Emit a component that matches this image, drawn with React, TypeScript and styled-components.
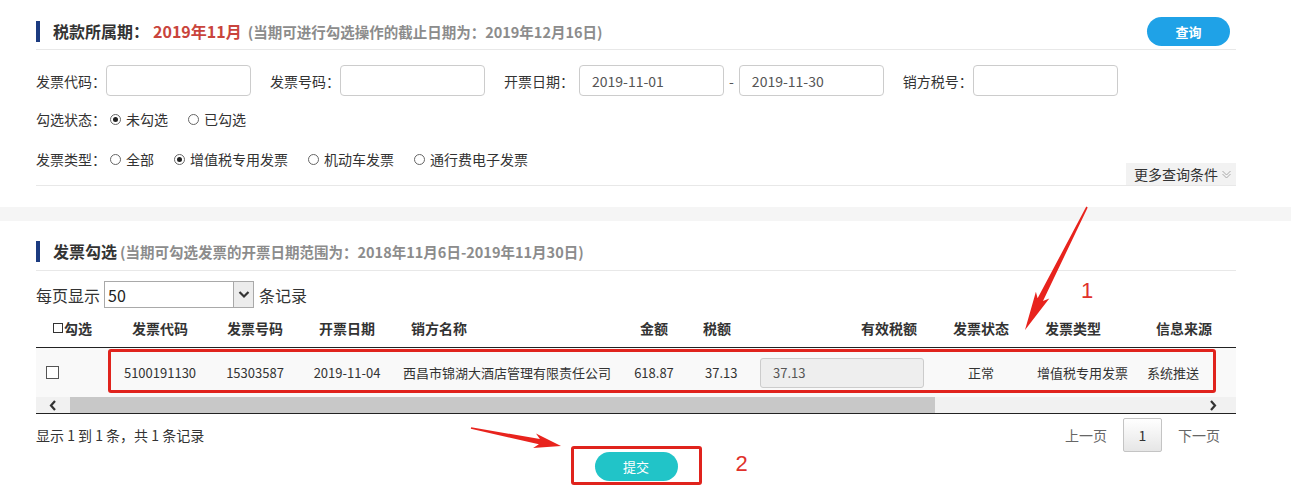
import React from "react";
import styled, { createGlobalStyle } from "styled-components";

const Global = createGlobalStyle`
  html, body { margin: 0; padding: 0; background: #f5f5f5; }
  body {
    font-family: "Noto Sans CJK SC", "Microsoft YaHei", "Liberation Sans", sans-serif;
    color: #333;
    font-size: 13px;
  }
  * { box-sizing: border-box; }
`;

const Page = styled.div`
  position: relative;
  min-height: 100vh;
  display: flex;
  flex-direction: column;
  gap: 14px;
  background: #f5f5f5;
  overflow: hidden;
`;

const Panel = styled.section<{ $pad: string; $grow?: boolean }>`
  background: #fff;
  padding: ${(p) => p.$pad};
  flex: ${(p) => (p.$grow ? "1" : "none")};
  display: flex;
  flex-direction: column;
`;

const TitleRow = styled.div<{ $pb: number }>`
  display: flex;
  align-items: center;
  justify-content: space-between;
  padding-bottom: ${(p) => p.$pb}px;
  border-bottom: 1px solid #e8e8e8;
`;

const Title = styled.div`
  display: flex;
  align-items: center;
  height: 21px;
  border-left: 4px solid #1c3b80;
  padding-left: 13px;
  white-space: nowrap;
`;

const TitleMain = styled.span`
  font-size: 16px;
  font-weight: 700;
  color: #333;
  line-height: 21px;
`;

const TitlePeriod = styled.span`
  font-size: 16px;
  font-weight: 700;
  color: #c9443c;
  margin-left: 4px;
  line-height: 21px;
`;

const TitleNote = styled.span<{ $ml: number }>`
  font-size: 14.5px;
  font-weight: 700;
  color: #8c8c8c;
  margin-left: ${(p) => p.$ml}px;
  line-height: 21px;
`;

const PillButton = styled.button<{ $bg: string; $w: number; $bold?: boolean }>`
  width: ${(p) => p.$w}px;
  height: 29px;
  border: none;
  border-radius: 15px;
  background: ${(p) => p.$bg};
  color: #fff;
  font-family: inherit;
  font-size: 13px;
  font-weight: ${(p) => (p.$bold ? 700 : 400)};
  padding: 0;
  cursor: pointer;
  flex: none;
`;

const QueryWrap = styled.div`
  margin-right: 6px;
  display: flex;
`;

const FilterArea = styled.div`
  padding-top: 15px;
  display: flex;
  flex-direction: column;
  border-bottom: 1px solid #e8e8e8;
`;

const FieldRow = styled.div`
  display: flex;
  align-items: center;
  height: 31px;
  gap: 19px;
`;

const Field = styled.div<{ $gap: number }>`
  display: flex;
  align-items: center;
  gap: ${(p) => p.$gap}px;
`;

const Label = styled.span`
  font-size: 14px;
  color: #333;
  line-height: 20px;
  white-space: nowrap;
`;

const TextInput = styled.div`
  width: 145px;
  height: 31px;
  border: 1px solid #cccccc;
  border-radius: 4px;
  background: #fff;
  display: flex;
  align-items: center;
  padding-left: 12px;
  font-size: 14px;
  color: #555;
`;

const Dash = styled.span`
  font-size: 14px;
  color: #555;
`;

const OptionRow = styled.div<{ $mt: number; $h: number }>`
  display: flex;
  justify-content: space-between;
  align-items: flex-start;
  margin-top: ${(p) => p.$mt}px;
  height: ${(p) => p.$h}px;
`;

const OptionLine = styled.div`
  display: flex;
  align-items: center;
  height: 20px;
`;

const RadioGroup = styled.div<{ $gap: number }>`
  display: flex;
  align-items: center;
  gap: ${(p) => p.$gap}px;
  margin-left: 4px;
`;

const RadioOption = styled.label`
  display: inline-flex;
  align-items: center;
  gap: 5px;
  font-size: 14px;
  color: #333;
  line-height: 20px;
  white-space: nowrap;
`;

const Radio = styled.span<{ $on?: boolean }>`
  width: 11px;
  height: 11px;
  border: 1px solid #666;
  border-radius: 50%;
  display: inline-flex;
  align-items: center;
  justify-content: center;
  flex: none;
  &::after {
    content: "";
    width: 5px;
    height: 5px;
    border-radius: 50%;
    background: ${(p) => (p.$on ? "#222" : "transparent")};
  }
`;

const MoreButton = styled.div`
  align-self: flex-end;
  height: 22px;
  display: flex;
  align-items: center;
  gap: 3px;
  padding: 0 4px 0 8px;
  background: #f2f2f2;
  font-size: 14px;
  color: #333;
  white-space: nowrap;
`;

const PageSizeRow = styled.div`
  display: flex;
  align-items: center;
  margin-top: 10px;
  height: 27px;
  font-size: 16px;
  color: #333;
  gap: 4px;
`;

const Select = styled.div`
  width: 150px;
  height: 27px;
  border: 1px solid #a9a9a9;
  display: flex;
  align-items: center;
  justify-content: space-between;
  padding: 0 0 0 3px;
  font-size: 16px;
  color: #222;
  background: #fff;
  margin-right: 1px;
`;

const SelectArrow = styled.span`
  width: 20px;
  height: 25px;
  border-left: 1px solid #a9a9a9;
  background: #ececec;
  display: flex;
  align-items: center;
  justify-content: center;
`;

const COLS = "74px 100px 90px 94px 226px 68px 62px 184px 94px 108px 100px";

type Align = "left" | "center" | "right";

const justify = (a: Align) =>
  a === "left" ? "flex-start" : a === "right" ? "flex-end" : "center";

const HeadRow = styled.div`
  display: grid;
  grid-template-columns: ${COLS};
  height: 40px;
  border-bottom: 1px solid #222;
`;

const HeadCell = styled.div<{ $align: Align; $pad: number }>`
  display: flex;
  align-items: center;
  justify-content: ${(p) => justify(p.$align)};
  padding-left: ${(p) => (p.$align === "left" ? p.$pad : 0)}px;
  padding-right: ${(p) => (p.$align === "right" ? p.$pad : 0)}px;
  font-size: 14px;
  font-weight: 700;
  color: #333;
  white-space: nowrap;
`;

const HeadBox = styled.span`
  width: 10px;
  height: 10px;
  border: 1px solid #333;
  display: inline-block;
  margin-right: 1px;
`;

const BodyWrap = styled.div`
  position: relative;
`;

const DataRow = styled.div`
  display: grid;
  grid-template-columns: ${COLS};
  height: 49px;
  background: #f9f9f9;
`;

const DataCell = styled.div<{ $align: Align; $pad: number }>`
  display: flex;
  align-items: center;
  justify-content: ${(p) => justify(p.$align)};
  padding-left: ${(p) => (p.$align === "left" ? p.$pad : 0)}px;
  font-size: 13px;
  color: #333;
  white-space: nowrap;
`;

const CheckBox = styled.span`
  width: 13px;
  height: 13px;
  border: 1px solid #555;
  background: #fff;
  display: inline-block;
`;

const TaxInput = styled.div`
  width: 164px;
  height: 30px;
  border: 1px solid #ccc;
  border-radius: 3px;
  background: #eeeeee;
  display: flex;
  align-items: center;
  padding-left: 12px;
  font-size: 13px;
  color: #555;
`;

const Highlight = styled.div<{ $l: number; $t: number; $w: number; $h: number }>`
  position: absolute;
  left: ${(p) => p.$l}px;
  top: ${(p) => p.$t}px;
  width: ${(p) => p.$w}px;
  height: ${(p) => p.$h}px;
  border: 3px solid #e0231d;
  border-radius: 3px;
  pointer-events: none;
`;

const ScrollBar = styled.div`
  display: flex;
  align-items: stretch;
  height: 17px;
  background: #f1f1f1;
  border-bottom: 1px solid #222;
`;

const ScrollArrow = styled.span<{ $w: number; $mr?: number }>`
  width: ${(p) => p.$w}px;
  margin-right: ${(p) => p.$mr ?? 0}px;
  display: flex;
  align-items: center;
  justify-content: center;
  flex: none;
`;

const ScrollThumb = styled.span<{ $w: number }>`
  width: ${(p) => p.$w}px;
  background: #c8c8c8;
  flex: none;
`;

const ScrollTrack = styled.span`
  flex: 1;
`;

const FooterRow = styled.div`
  display: flex;
  align-items: center;
  justify-content: space-between;
  margin-top: 4px;
  height: 34px;
`;

const Info = styled.span`
  font-size: 14px;
  color: #333;
`;

const Pager = styled.div`
  display: flex;
  align-items: center;
  gap: 16px;
  margin-right: 16px;
`;

const PagerLink = styled.span`
  font-size: 14px;
  color: #666;
`;

const PagerBox = styled.span`
  width: 39px;
  height: 34px;
  border: 1px solid #c4c4c4;
  border-radius: 2px;
  background: linear-gradient(#ffffff, #e6e6e6);
  display: flex;
  align-items: center;
  justify-content: center;
  font-size: 14px;
  color: #333;
`;

const SubmitRow = styled.div`
  display: flex;
  justify-content: center;
`;

const SubmitWrap = styled.div`
  position: relative;
  display: flex;
`;

const Badge = styled.span<{ $l: number; $t: number }>`
  position: absolute;
  left: ${(p) => p.$l}px;
  top: ${(p) => p.$t}px;
  font-family: "Liberation Sans", Arial, sans-serif;
  font-size: 22px;
  line-height: 22px;
  color: #e0312b;
  pointer-events: none;
`;

const Overlay = styled.svg`
  position: absolute;
  left: 0;
  top: 0;
  pointer-events: none;
`;

// arrow polygon computed from start/tip
function arrowPoints(
  sx: number,
  sy: number,
  tx: number,
  ty: number,
  headLen: number,
  headHalf: number,
  w0: number,
  w1: number
) {
  const dx = tx - sx;
  const dy = ty - sy;
  const len = Math.hypot(dx, dy);
  const ux = dx / len;
  const uy = dy / len;
  const nx = -uy;
  const ny = ux;
  const bx = tx - ux * headLen;
  const by = ty - uy * headLen;
  const cx = tx - ux * (headLen + 5);
  const cy = ty - uy * (headLen + 5);
  const pts = [
    [sx + nx * w0, sy + ny * w0],
    [bx + nx * w1, by + ny * w1],
    [cx + nx * headHalf, cy + ny * headHalf],
    [tx, ty],
    [cx - nx * headHalf, cy - ny * headHalf],
    [bx - nx * w1, by - ny * w1],
    [sx - nx * w0, sy - ny * w0],
  ];
  return pts.map((p) => `${p[0].toFixed(1)},${p[1].toFixed(1)}`).join(" ");
}

const DoubleChevron = () => (
  <svg width="11" height="11" viewBox="0 0 11 11">
    <polyline points="1.5,2 5.5,6 9.5,2" fill="none" stroke="#aaa" strokeWidth="1" />
    <polyline points="1.5,5 5.5,9 9.5,5" fill="none" stroke="#aaa" strokeWidth="1" />
  </svg>
);

const Chevron = ({ dir }: { dir: "left" | "right" | "down" }) => {
  const pts =
    dir === "left" ? "6,1 2,5.5 6,10" : dir === "right" ? "2,1 6,5.5 2,10" : "1.5,3 6,7.5 10.5,3";
  const size = dir === "down" ? { w: 12, h: 11 } : { w: 8, h: 11 };
  return (
    <svg width={size.w} height={size.h} viewBox={`0 0 ${size.w} ${size.h}`}>
      <polyline points={pts} fill="none" stroke="#333" strokeWidth="2.2" />
    </svg>
  );
};

interface Col {
  head: React.ReactNode;
  cell: React.ReactNode;
  ha: Align;
  hp: number;
  ca: Align;
  cp: number;
}

const columns: Col[] = [
  {
    head: (
      <>
        <HeadBox />
        勾选
      </>
    ),
    cell: <CheckBox />,
    ha: "left",
    hp: 17,
    ca: "left",
    cp: 10,
  },
  { head: "发票代码", cell: "5100191130", ha: "center", hp: 0, ca: "center", cp: 0 },
  { head: "发票号码", cell: "15303587", ha: "center", hp: 0, ca: "center", cp: 0 },
  { head: "开票日期", cell: "2019-11-04", ha: "center", hp: 0, ca: "center", cp: 0 },
  { head: "销方名称", cell: "西昌市锦湖大酒店管理有限责任公司", ha: "left", hp: 17, ca: "left", cp: 9 },
  { head: "金额", cell: "618.87", ha: "center", hp: 0, ca: "center", cp: 0 },
  { head: "税额", cell: "37.13", ha: "left", hp: 15, ca: "left", cp: 17 },
  { head: "有效税额", cell: <TaxInput>37.13</TaxInput>, ha: "right", hp: 17, ca: "left", cp: 10 },
  { head: "发票状态", cell: "正常", ha: "center", hp: 0, ca: "center", cp: 0 },
  { head: "发票类型", cell: "增值税专用发票", ha: "left", hp: 17, ca: "left", cp: 9 },
  { head: "信息来源", cell: "系统推送", ha: "left", hp: 20, ca: "left", cp: 11 },
];

export default function App() {
  return (
    <>
      <Global />
      <Page>
        <Panel $pad="17px 55px 21px 36px">
          <TitleRow $pb={3}>
            <Title>
              <TitleMain>税款所属期：</TitleMain>
              <TitlePeriod>2019年11月</TitlePeriod>
              <TitleNote $ml={6}>(当期可进行勾选操作的截止日期为：2019年12月16日)</TitleNote>
            </Title>
            <QueryWrap>
              <PillButton $bg="#1fa2e7" $w={83} $bold>
                查询
              </PillButton>
            </QueryWrap>
          </TitleRow>
          <FilterArea>
            <FieldRow>
              <Field $gap={0}>
                <Label>发票代码：</Label>
                <TextInput />
              </Field>
              <Field $gap={0}>
                <Label>发票号码：</Label>
                <TextInput />
              </Field>
              <Field $gap={5}>
                <Label>开票日期：</Label>
                <TextInput>2019-11-01</TextInput>
                <Dash>-</Dash>
                <TextInput>2019-11-30</TextInput>
              </Field>
              <Field $gap={0}>
                <Label>销方税号：</Label>
                <TextInput />
              </Field>
            </FieldRow>
            <OptionRow $mt={13} $h={20}>
              <OptionLine>
                <Label>勾选状态：</Label>
                <RadioGroup $gap={20}>
                  <RadioOption>
                    <Radio $on />
                    未勾选
                  </RadioOption>
                  <RadioOption>
                    <Radio />
                    已勾选
                  </RadioOption>
                </RadioGroup>
              </OptionLine>
            </OptionRow>
            <OptionRow $mt={20} $h={36}>
              <OptionLine>
                <Label>发票类型：</Label>
                <RadioGroup $gap={20}>
                  <RadioOption>
                    <Radio />
                    全部
                  </RadioOption>
                  <RadioOption>
                    <Radio $on />
                    增值税专用发票
                  </RadioOption>
                  <RadioOption>
                    <Radio />
                    机动车发票
                  </RadioOption>
                  <RadioOption>
                    <Radio />
                    通行费电子发票
                  </RadioOption>
                </RadioGroup>
              </OptionLine>
              <MoreButton>
                更多查询条件
                <DoubleChevron />
              </MoreButton>
            </OptionRow>
          </FilterArea>
        </Panel>

        <Panel $pad="20px 55px 12px 36px" $grow>
          <TitleRow $pb={8}>
            <Title>
              <TitleMain>发票勾选</TitleMain>
              <TitleNote $ml={3}>(当期可勾选发票的开票日期范围为：2018年11月6日-2019年11月30日)</TitleNote>
            </Title>
          </TitleRow>
          <PageSizeRow>
            每页显示
            <Select>
              50
              <SelectArrow>
                <Chevron dir="down" />
              </SelectArrow>
            </Select>
            条记录
          </PageSizeRow>
          <HeadRow>
            {columns.map((c, i) => (
              <HeadCell key={i} $align={c.ha} $pad={c.hp}>
                {c.head}
              </HeadCell>
            ))}
          </HeadRow>
          <BodyWrap>
            <DataRow>
              {columns.map((c, i) => (
                <DataCell key={i} $align={c.ca} $pad={c.cp}>
                  {c.cell}
                </DataCell>
              ))}
            </DataRow>
            <Highlight $l={72} $t={1} $w={1108} $h={44} />
          </BodyWrap>
          <ScrollBar>
            <ScrollArrow $w={34}>
              <Chevron dir="left" />
            </ScrollArrow>
            <ScrollThumb $w={865} />
            <ScrollTrack />
            <ScrollArrow $w={18} $mr={14}>
              <Chevron dir="right" />
            </ScrollArrow>
          </ScrollBar>
          <FooterRow>
            <Info>显示 1 到 1 条，共 1 条记录</Info>
            <Pager>
              <PagerLink>上一页</PagerLink>
              <PagerBox>1</PagerBox>
              <PagerLink>下一页</PagerLink>
            </Pager>
          </FooterRow>
          <SubmitRow>
            <SubmitWrap>
              <PillButton $bg="#21c4c8" $w={83}>
                提交
              </PillButton>
              <Highlight $l={-24} $t={-6} $w={131} $h={39} />
              <Badge $l={141} $t={1}>
                2
              </Badge>
            </SubmitWrap>
          </SubmitRow>
        </Panel>

        <Badge $l={1081} $t={280}>
          1
        </Badge>
        <Overlay width="1291" height="493" viewBox="0 0 1291 493">
          <polygon
            points={arrowPoints(1087, 207, 1025, 330, 34, 7.5, 0.8, 3)}
            fill="#e8231d"
          />
          <polygon
            points={arrowPoints(471, 428, 561, 446, 22, 7.5, 0.8, 2.6)}
            fill="#e8231d"
          />
        </Overlay>
      </Page>
    </>
  );
}
